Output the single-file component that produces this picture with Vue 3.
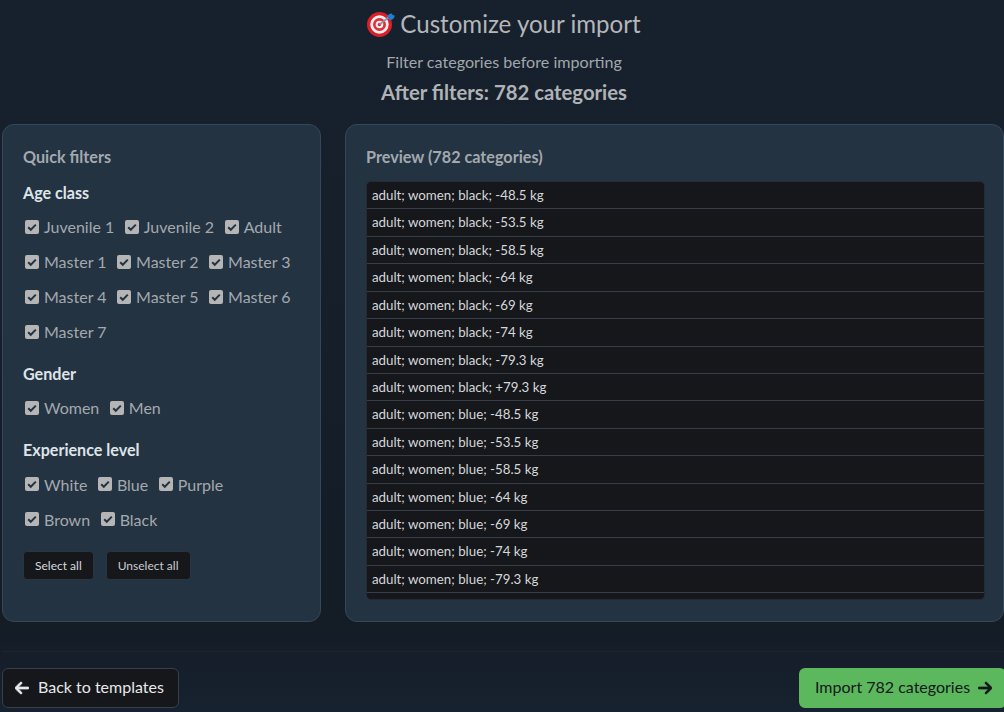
<template>
  <div class="page">
    <header class="head">
      <h1 class="title">
        <svg class="dart" viewBox="0 0 28 26" width="28" height="26">
          <circle cx="12.500" cy="13.500" r="12.500" fill="#d8202b" />
          <circle cx="12.500" cy="13.500" r="9.200" fill="#f5eeee" />
          <circle cx="12.500" cy="13.500" r="6.500" fill="#e0303a" />
          <circle cx="12.500" cy="13.500" r="3.800" fill="#f5eeee" />
          <circle cx="12.500" cy="13.500" r="1.700" fill="#d8202b" />
          <path d="M12.500 13.500 L22 6" stroke="#8b97a2" stroke-width="1.600" />
          <path d="M20.500 4.500 L23 2.800 L25 2.500 L25.500 4 L27.800 4.500 L27 7 L25 8.800 L23 9 L21 7Z" fill="#1f7fd1" />
        </svg>
        Customize your import
      </h1>
      <p class="sub">Filter categories before importing</p>
      <p class="after">After filters: {{ total }} categories</p>
    </header>

    <div class="columns">
      <section class="panel filters">
        <h2 class="panel-title">Quick filters</h2>
        <div v-for="g in groups" :key="g.name" class="group">
          <h3 class="group-title">{{ g.name }}</h3>
          <div class="checks">
            <label v-for="o in g.options" :key="o" class="check">
              <span class="box">
                <svg viewBox="0 0 14 14" width="14" height="14">
                  <path d="M3.200 7.200 L5.800 9.800 L10.800 4.600" fill="none" stroke="#243342" stroke-width="2" />
                </svg>
              </span>
              {{ o }}
            </label>
          </div>
        </div>
        <div class="actions">
          <button class="small-btn sel">Select all</button>
          <button class="small-btn">Unselect all</button>
        </div>
      </section>

      <section class="panel preview">
        <h2 class="panel-title">Preview ({{ total }} categories)</h2>
        <ul class="list">
          <li v-for="r in rows" :key="r" class="row">{{ r }}</li>
        </ul>
      </section>
    </div>

    <footer class="foot">
      <button class="btn back">
        <svg class="arrow" viewBox="0 0 448 512" width="14" height="16">
          <path d="M9.400 233.400c-12.500 12.500-12.500 32.800 0 45.300l160 160c12.500 12.500 32.800 12.500 45.300 0s12.500-32.800 0-45.300L109.200 288 416 288c17.700 0 32-14.300 32-32s-14.300-32-32-32l-306.700 0L214.600 118.600c12.500-12.500 12.500-32.800 0-45.300s-32.800-12.500-45.300 0l-160 160z" />
        </svg>
        Back to templates
      </button>
      <button class="btn go">
        Import {{ total }} categories
        <svg class="arrow" viewBox="0 0 448 512" width="14" height="16">
          <path d="M438.600 278.600c12.500-12.500 12.500-32.800 0-45.300l-160-160c-12.500-12.500-32.800-12.500-45.300 0s-12.500 32.800 0 45.300L338.800 224 32 224c-17.700 0-32 14.300-32 32s14.300 32 32 32l306.700 0L233.400 393.400c-12.500 12.500-12.500 32.800 0 45.300s32.800 12.500 45.300 0l160-160z" />
        </svg>
      </button>
    </footer>
  </div>
</template>

<script setup>
const total = 782

const groups = [
  { name: 'Age class', options: ['Juvenile 1', 'Juvenile 2', 'Adult', 'Master 1', 'Master 2', 'Master 3', 'Master 4', 'Master 5', 'Master 6', 'Master 7'] },
  { name: 'Gender', options: ['Women', 'Men'] },
  { name: 'Experience level', options: ['White', 'Blue', 'Purple', 'Brown', 'Black'] },
]

const blackW = ['-48.5', '-53.5', '-58.5', '-64', '-69', '-74', '-79.3', '+79.3']
const blueW = ['-48.5', '-53.5', '-58.5', '-64', '-69', '-74', '-79.3']
const rows = [
  ...blackW.map((w) => `adult; women; black; ${w} kg`),
  ...blueW.map((w) => `adult; women; blue; ${w} kg`),
]
</script>

<style>
html, body {
  margin: 0;
  height: 712px;
  overflow: hidden;
  background: #16202c;
}
</style>

<style scoped>
.page {
  box-sizing: border-box;
  height: 712px;
  padding-left: 2px;
  font-family: Lato, "Liberation Sans", sans-serif;
  background: linear-gradient(180deg, #17212d 0%, #141c26 88%, #172230 100%);
  display: flex;
  flex-direction: column;
  overflow: hidden;
}

.head {
  box-sizing: border-box;
  height: 124px;
  padding-left: 2px;
  text-align: center;
  flex: none;
}
.title {
  margin: 0;
  padding-top: 6px;
  font-size: 24.100px;
  font-weight: 400;
  line-height: 36px;
  color: #b4b6b8;
  display: flex;
  justify-content: center;
  align-items: center;
  gap: 5px;
}
.sub {
  margin: 11px 0 0;
  font-size: 16.100px;
  line-height: 18px;
  color: #a2a7ab;
}
.after {
  margin: 9px 0 0;
  font-size: 20.300px;
  font-weight: 700;
  line-height: 24px;
  color: #b0b3b6;
}

.columns {
  display: flex;
  gap: 24px;
  height: 498px;
  flex: none;
}
.panel {
  box-sizing: border-box;
  background: #243342;
  border: 1px solid #35475a;
  border-radius: 12px;
  padding: 23px 20px 0;
}
.filters {
  width: 319px;
  flex: none;
  padding-right: 26px;
}
.preview {
  flex: 1;
  min-width: 0;
  padding-right: 18px;
}
.panel-title {
  margin: 0;
  font-size: 16.200px;
  font-weight: 700;
  line-height: 18px;
  color: #a3a9ae;
}

.group {
  margin-top: 18px;
}
.group-title {
  margin: 0;
  font-size: 16.100px;
  font-weight: 700;
  line-height: 18px;
  color: #dfe4e8;
}
.group + .group {
  margin-top: 23px;
}
.checks {
  display: flex;
  flex-wrap: wrap;
  column-gap: 10.500px;
  row-gap: 14px;
  margin: 14.200px 0 0 2px;
}
.check {
  display: flex;
  align-items: center;
  gap: 5px;
  font-size: 16px;
  line-height: 21px;
  color: #a3a9ae;
}
.box {
  width: 14px;
  height: 14px;
  border-radius: 2px;
  background: #b5b5b5;
  display: block;
}
.box svg {
  display: block;
}

.actions {
  display: flex;
  gap: 12px;
  margin-top: 21.400px;
}
.small-btn {
  height: 29px;
  padding: 0 11px;
  background: #16171b;
  border: 1px solid #2b3440;
  border-radius: 4px;
  color: #c8ccd0;
  font-family: inherit;
  font-size: 12px;
}
.small-btn.sel {
  color: #d5d9dd;
}

.list {
  list-style: none;
  margin: 15px 0 0;
  padding: 0;
  height: 419px;
  overflow: hidden;
  background: #16171b;
  border-radius: 5px;
  border: 1px solid #232b36;
  box-sizing: border-box;
}
.row {
  box-sizing: border-box;
  height: 27.430px;
  padding: 0 5px;
  line-height: 26.430px;
  font-size: 13.300px;
  color: #d5d7da;
  border-bottom: 1px solid #383d4a;
}

.foot {
  margin-top: 29px;
  border-top: 1px solid #1c2632;
  padding-top: 16px;
  display: flex;
  justify-content: space-between;
  align-items: flex-start;
  flex: none;
}
.btn {
  box-sizing: border-box;
  height: 40px;
  padding-bottom: 5px;
  display: flex;
  align-items: center;
  gap: 8px;
  font-family: inherit;
  font-size: 16px;
  border-radius: 6px;
}
.arrow {
  fill: currentColor;
  stroke: currentColor;
  stroke-width: 24;
  margin-top: 4px;
}
.back {
  width: 177px;
  gap: 9px;
  padding-left: 12px;
  padding-right: 0;
  background: #16171b;
  border: 1px solid #36404c;
  color: #e6e8ea;
}
.go {
  width: 207px;
  margin-right: -2px;
  padding-left: 16px;
  padding-right: 0;
  background: #5cb85c;
  border: none;
  color: #14171c;
}
</style>
